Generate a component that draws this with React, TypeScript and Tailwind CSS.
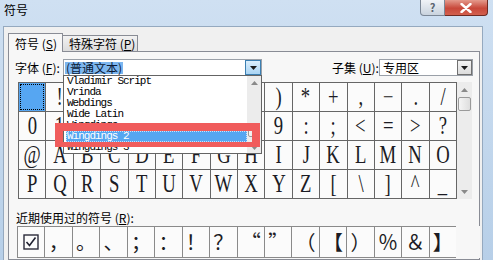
import React from 'react';

const gridRows: string[][] = [
  [' ', '!', '"', '#', '$', '%', '&', "'", '(', ')', '*', '+', ',', '−', '.', '/'],
  ['0', '1', '2', '3', '4', '5', '6', '7', '8', '9', ':', ';', '<', '=', '>', '?'],
  ['@', 'A', 'B', 'C', 'D', 'E', 'F', 'G', 'H', 'I', 'J', 'K', 'L', 'M', 'N', 'O'],
  ['P', 'Q', 'R', 'S', 'T', 'U', 'V', 'W', 'X', 'Y', 'Z', '[', '\\', ']', '^', '_'],
];

const recent = ['☑', '，', '。', '、', '；', '：', '！', '？', '“', '”', '（', '【', '）', '％', '＆', '】'];

const fontItems = ['Vladimir Script', 'Vrinda', 'Webdings', 'Wide Latin', 'Wingdings', 'Wingdings 2', 'Wingdings 3'];

const ui = "font-['Noto_Sans_CJK_SC',sans-serif]";

function Arrow({ up = false }: { up?: boolean }) {
  return (
    <svg width="7" height="4" viewBox="0 0 7 4">
      <path d={up ? 'M0 4 L3.5 0 L7 4 Z' : 'M0 0 L7 0 L3.5 4 Z'} fill={up ? '#8a8a8a' : '#1a1a1a'} />
    </svg>
  );
}

function CheckBox() {
  return (
    <svg width="16" height="16" viewBox="0 0 16 16">
      <rect x="1" y="1" width="14" height="14" fill="none" stroke="#2b2b3a" strokeWidth="1.4" />
      <path d="M3.5 8 L6.5 11.5 L12.5 3.5" fill="none" stroke="#1f2030" strokeWidth="1.6" />
    </svg>
  );
}

export default function App() {
  return (
    <div className={`relative w-[493px] h-[260px] overflow-hidden flex flex-col bg-[linear-gradient(180deg,#cfe0f2,#b7cfe8)] text-black ${ui}`}>
      {/* Title bar */}
      <div className="h-[26px] flex items-start shrink-0">
        <span className="pl-[4px] pt-[3px] text-[12px] leading-[14px]">符号</span>
        <div className="ml-auto mr-[5px] flex">
          <div className="w-[25px] h-[16px] rounded-bl-[4px] border border-t-0 border-[#7b8796] bg-[linear-gradient(180deg,#f0f3f7,#c9d3de)] flex items-center justify-center text-[11px] leading-none text-[#5b6470] font-bold">
            ?
          </div>
          <div className="w-[43px] h-[16px] rounded-br-[4px] border border-t-0 border-l-0 border-[#6e2a22] bg-[linear-gradient(180deg,#e49a8c,#c8483a_55%,#d2604e)] flex items-center justify-center">
            <svg width="12" height="10" viewBox="0 0 12 10">
              <path d="M1.5 1 L10.5 9 M10.5 1 L1.5 9" stroke="#ffffff" strokeWidth="2.4" strokeLinecap="round" />
            </svg>
          </div>
        </div>
      </div>

      {/* Dialog body */}
      <div className="flex-1 ml-[3px] mr-[10px] bg-[#f0f0f0] border border-b-0 border-[#95a9bf] flex flex-col">
        {/* Tabs */}
        <div className="h-[24px] pl-[4px] flex items-end shrink-0">
          <div className="relative z-10 w-[55px] h-[19px] -mb-px bg-[#f7f7f7] border border-b-0 border-[#898c95] text-[12px] leading-[14px] pt-[3px] pl-[6px]">
            符号 (<u>S</u>)
          </div>
          <div className="w-[75px] h-[16px] bg-[linear-gradient(180deg,#f2f2f2,#dcdcdc)] border border-l-0 border-b-0 border-[#898c95] text-[12px] leading-[14px] pt-[1px] pl-[6px]">
            特殊字符 (<u>P</u>)
          </div>
        </div>

        {/* Tab page */}
        <div className="ml-[4px] w-[472px] flex-1 bg-[#f7f7f7] border border-[#898c95] pt-[7px] pl-[6px] flex flex-col">
          {/* Font / subset row */}
          <div className="flex items-center h-[17px]">
            <span className="w-[48px] text-[12px] leading-[14px]">字体 (<u>F</u>):</span>
            <div className="w-[199px] h-[17px] bg-white border border-[#9aa0a8] flex items-center">
              <span className="ml-px h-[12px] bg-[#7db6ef] text-[#0b1a36] text-[12px] leading-[12px] px-px">(普通文本)</span>
              <div className="ml-auto w-[16px] h-[15px] bg-[linear-gradient(180deg,#dbeefb,#a9d4f4)] border border-[#3c7fb1] flex items-center justify-center">
                <Arrow />
              </div>
            </div>
            <span className="ml-[70px] w-[47px] text-[12px] leading-[14px]">子集 (<u>U</u>):</span>
            <div className="w-[94px] h-[17px] bg-white border border-[#9aa0a8] flex items-center">
              <span className="ml-[3px] text-[12px] leading-[14px]">专用区</span>
              <div className="ml-auto w-[15px] h-[15px] bg-[linear-gradient(180deg,#f4f4f4,#dcdcdc)] border border-[#707070] flex items-center justify-center">
                <Arrow />
              </div>
            </div>
          </div>

          {/* Symbol grid + scrollbar */}
          <div className="mt-[6px] ml-[3px] flex">
            <div className="w-[439px] grid grid-cols-16 auto-rows-[28px] gap-px p-px bg-[#666666]">
              {gridRows.flat().map((c, i) => (
                <div
                  key={i}
                  className={`flex items-center justify-center text-[22px] leading-none font-['Liberation_Serif',serif] text-[#1c1c24] ${
                    i === 0 ? 'bg-[#56a6f2] outline-1 outline-dotted outline-black -outline-offset-2' : 'bg-[#fbfbfb]'
                  }`}
                >
                  <span className="scale-x-[0.85] scale-y-[1.1]">{c}</span>
                </div>
              ))}
            </div>
            <div className="w-[15px] h-[117px] bg-[#ececec] flex flex-col items-center">
              <div className="h-[15px] flex items-center justify-center">
                <Arrow up />
              </div>
              <div className="w-[13px] h-[14px] rounded-[2px] border border-[#9a9a9a] bg-[linear-gradient(90deg,#f5f5f5,#dedede)]" />
              <div className="flex-1" />
              <div className="h-[15px] flex items-center justify-center">
                <svg width="7" height="4" viewBox="0 0 7 4">
                  <path d="M0 0 L7 0 L3.5 4 Z" fill="#8a8a8a" />
                </svg>
              </div>
            </div>
          </div>

          {/* Recent symbols */}
          <div className="mt-[12px] ml-px text-[12px] leading-[14px]">近期使用过的符号 (<u>R</u>):</div>
          <div className="mt-px ml-[2px] w-[463px] h-[32px] grid grid-cols-[repeat(16,26.44px)_1fr] gap-px p-px bg-[#8a8a8a]">
            {recent.map((c, i) => (
              <div key={i} className="bg-[#fbfbfb] flex items-center justify-center text-[20px] leading-none text-[#1c1c24]">
                {i === 0 ? <CheckBox /> : c}
              </div>
            ))}
            <div className="bg-[#f7f7f7] -ml-px -my-px -mr-px" />
          </div>
        </div>
      </div>

      {/* Open font dropdown list */}
      <div className="absolute left-[63px] top-[75px] w-[199px] h-[79px] bg-white border border-[#646464] flex">
        <div className="flex-1 flex flex-col pl-[2px]">
          {fontItems.map((f) => (
            <div
              key={f}
              className={`h-[11px] leading-[11px] text-[11px] tracking-[-1px] font-['Liberation_Mono',monospace] whitespace-pre pl-px ${
                f === 'Wingdings 2' ? 'bg-[#55a6f1] text-white outline-1 outline-dotted outline-[#c9e2fa] -outline-offset-1' : 'text-black'
              }`}
            >
              {f}
            </div>
          ))}
        </div>
        <div className="w-[14px] bg-[#ececec] flex flex-col items-center">
          <div className="h-[13px] flex items-center justify-center">
            <Arrow up />
          </div>
          <div className="mt-[34px] w-[12px] h-[14px] rounded-[2px] border border-[#9a9a9a] bg-[linear-gradient(90deg,#f5f5f5,#dedede)]" />
          <div className="flex-1" />
          <div className="h-[10px] flex items-center justify-center">
            <svg width="7" height="4" viewBox="0 0 7 4">
              <path d="M0 0 L7 0 L3.5 4 Z" fill="#8a8a8a" />
            </svg>
          </div>
        </div>
      </div>

      {/* Red annotation box */}
      <div className="absolute left-[55px] top-[123px] w-[205px] h-[24px] border-t-[8px] border-b-[5px] border-x-[8px] border-[#f05c5c]" />
    </div>
  );
}
